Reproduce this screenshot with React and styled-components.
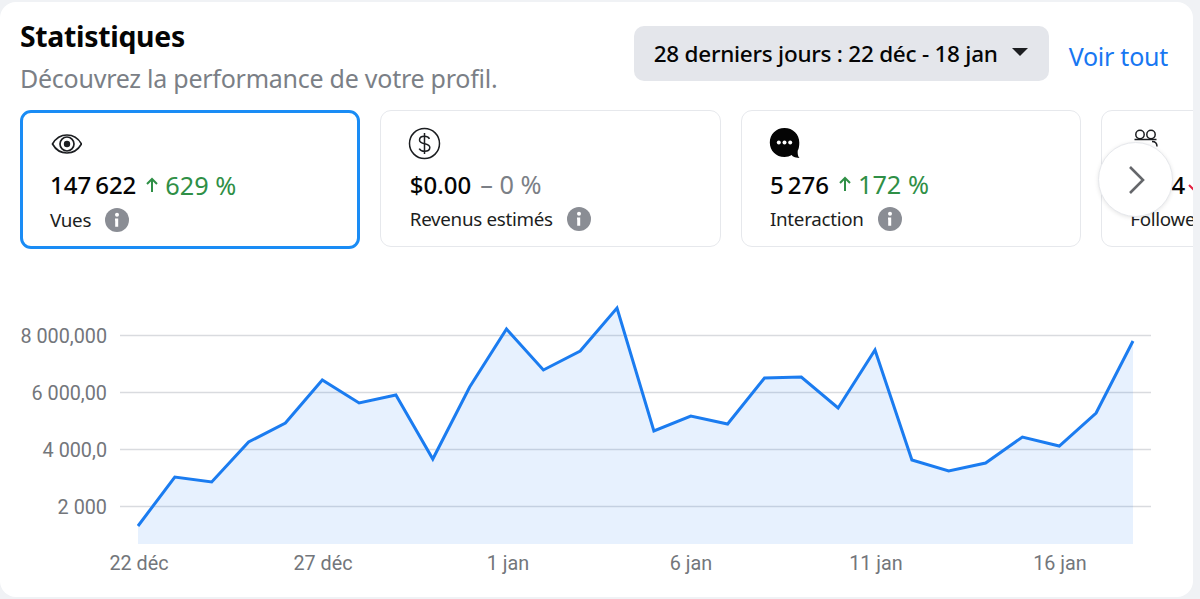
import React from "react";
import styled, { createGlobalStyle } from "styled-components";

const GlobalStyle = createGlobalStyle`
  html, body {
    margin: 0;
    padding: 0;
    background: #f0f2f5;
    font-family: "Noto Sans", "Open Sans", sans-serif;
  }
`;

const Page = styled.div`
  width: 1200px;
  height: 599px;
  padding: 2px 7px 2px 0;
  box-sizing: border-box;
  overflow: hidden;
`;

const Panel = styled.section`
  position: relative;
  height: 100%;
  background: #fff;
  border-radius: 16px;
  overflow: hidden;
  padding: 0 0 0 20px;
  box-sizing: border-box;
`;

const Header = styled.header`
  display: flex;
  justify-content: space-between;
  height: 108px;
  padding: 16px 25px 0 0;
  box-sizing: border-box;
`;

const Title = styled.h1`
  margin: 0;
  font-size: 28.4px;
  line-height: 36px;
  font-weight: 700;
  color: #050505;
  letter-spacing: -0.3px;
`;

const Subtitle = styled.p`
  margin: 9px 0 0;
  font-size: 25px;
  line-height: 30px;
  color: #7b7f86;
  letter-spacing: -0.25px;
`;

const Actions = styled.div`
  display: flex;
  align-items: flex-start;
  gap: 20px;
  padding-top: 8px;
`;

const RangeButton = styled.button`
  display: flex;
  align-items: center;
  gap: 14px;
  width: 415px;
  height: 55px;
  padding: 0 20px;
  box-sizing: border-box;
  border: 0;
  border-radius: 10px;
  background: #e4e6eb;
  color: #050505;
  font: 500 22.5px "Noto Sans", sans-serif;
  letter-spacing: -0.25px;
  white-space: nowrap;
`;

const Caret = styled.span`
  width: 0;
  height: 0;
  margin-top: -3px;
  border-left: 8px solid transparent;
  border-right: 8px solid transparent;
  border-top: 8px solid #1c1e21;
`;

const SeeAll = styled.a`
  font-size: 25px;
  line-height: 60px;
  color: #1877f2;
  white-space: nowrap;
  letter-spacing: -0.25px;
`;

const CardRow = styled.div`
  display: flex;
  gap: 20px;
  height: 140px;
  overflow: hidden;
`;

const Card = styled.div`
  flex: 0 0 auto;
  width: 340.25px;
  height: ${(p) => (p.$active ? "139px" : "137px")};
  padding: ${(p) => (p.$active ? "14.5px 0 0 27px" : "16px 0 0 28.5px")};
  box-sizing: border-box;
  border: ${(p) => (p.$active ? "3px solid #1a8cf5" : "1.5px solid #e6e8ec")};
  border-radius: 11px;
  background: #fff;
`;

const IconSlot = styled.div`
  display: flex;
  align-items: center;
  height: 32px;
  margin-left: -1.5px;
  color: #1c1e21;
`;

const Figures = styled.div`
  display: flex;
  align-items: center;
  margin-top: 7px;
  height: 36px;
  white-space: nowrap;
`;

const Total = styled.span`
  font-size: 24px;
  font-weight: 500;
  color: #050505;
  margin-right: ${(p) => (p.$tight ? "2px" : "9px")};
`;

const Change = styled.span`
  display: inline-flex;
  align-items: center;
  gap: 6px;
  font-size: 25.3px;
  color: ${(p) => p.$color};
`;

const LabelRow = styled.div`
  display: flex;
  align-items: center;
  gap: 14px;
  height: 26px;
  margin-top: 4px;
  font-size: 18.8px;
  letter-spacing: -0.3px;
  color: #1c1e21;
  white-space: nowrap;
`;

const NextButton = styled.button`
  position: absolute;
  left: 1098px;
  top: 140px;
  width: 75px;
  height: 75px;
  display: flex;
  align-items: center;
  justify-content: center;
  padding: 0;
  border: 1px solid #e6e8ec;
  border-radius: 50%;
  background: #fff;
  box-shadow: 0 1px 4px rgba(0, 0, 0, 0.1);
`;

const ChartWrap = styled.div`
  margin-left: -20px;
  height: 349px;
`;

const ChartSvg = styled.svg`
  display: block;
`;

const AxisLabel = styled.text`
  font-family: "Roboto", "Liberation Sans", sans-serif;
  font-size: 19.8px;
  fill: #73767b;
`;

const EyeIcon = () => (
  <svg width="33.2" height="24" viewBox="-1 5 33.2 24" fill="none" stroke="#1c1e21" strokeWidth="1.7">
    <path d="M2.5 17C6 10.8 11 8 17 8s11 2.8 14.5 9C28 23.2 23 26 17 26S6 23.2 2.5 17Z" />
    <circle cx="17" cy="17" r="7" />
    <circle cx="17" cy="17" r="3.2" fill="#1c1e21" stroke="none" />
  </svg>
);

const DollarIcon = () => (
  <svg width="33" height="33" viewBox="0 0 33 33" fill="none" stroke="#1c1e21" strokeWidth="1.5">
    <circle cx="16.5" cy="16.5" r="15" />
    <path d="M21.5 11.8c-1-1.6-2.8-2.5-5-2.5-2.9 0-5 1.500-5 3.700 0 5.200 10.300 2.300 10.300 7.500 0 2.200-2.200 3.800-5.300 3.800-2.400 0-4.300-1-5.300-2.700" />
    <path d="M16.500 6v21" />
  </svg>
);

const BubbleIcon = () => (
  <svg width="32" height="33" viewBox="0 0 32 33">
    <path d="M15.500 1C7 1 .8 7.300.8 15.500S7 30 15.500 30c2.700 0 5.200-.7 7.300-1.900.5 1.300 2.500 2.700 7.700 2.900-1.600-1.700-2-4-1.800-7.300C30 21.500 30.300 18.500 30.300 15.500 30.300 7.300 24 1 15.500 1Z" fill="#050505" />
    <circle cx="9.800" cy="15.500" r="2" fill="#fff" />
    <circle cx="15.500" cy="15.500" r="2" fill="#fff" />
    <circle cx="21.200" cy="15.500" r="2" fill="#fff" />
  </svg>
);

const PeopleIcon = () => (
  <svg width="30" height="32" viewBox="-4 -1.500 30 32" fill="none" stroke="#1c1e21" strokeWidth="1.5">
    <circle cx="7" cy="6" r="4.200" />
    <circle cx="18" cy="6" r="4.200" />
    <path d="M1.500 11h22" />
    <path d="M19 13c3 0 5 2 5 5" />
  </svg>
);

const InfoIcon = () => (
  <svg width="24" height="24" viewBox="0 0 24 24">
    <circle cx="12" cy="12" r="12" fill="#8a8d94" />
    <circle cx="12" cy="6.800" r="2" fill="#fff" />
    <path d="M10 10.500h3.200v8.200h-3V12.400H10Z" fill="#fff" />
  </svg>
);

const ArrowUp = ({ color }) => (
  <svg width="14" height="16" viewBox="0 0 14 16" fill="none" stroke={color} strokeWidth="2">
    <path d="M7 15V2M2 7l5-5 5 5" />
  </svg>
);

const ArrowDown = ({ color }) => (
  <svg width="14" height="16" viewBox="0 0 14 16" fill="none" stroke={color} strokeWidth="2">
    <path d="M7 1v13M2 9l5 5 5-5" />
  </svg>
);

const stats = [
  { key: "views", icon: <EyeIcon />, total: "147\u2009622", change: "629 %", dir: "up", label: "Vues", active: true },
  { key: "money", icon: <DollarIcon />, total: "$0.00", change: "– 0 %", dir: "none", label: "Revenus estimés" },
  { key: "inter", icon: <BubbleIcon />, total: "5\u2009276", change: "172 %", dir: "up", label: "Interaction" },
  { key: "follow", icon: <PeopleIcon />, total: "1004", change: "4 %", dir: "down", label: "Followers" },
];

const colors = { up: "#2f8f46", none: "#7b7f86", down: "#e41e3f" };

const points = [
  526, 477, 482, 442, 423, 380, 403, 395, 459, 387, 329, 370, 351, 308,
  431, 416, 424, 378, 377, 408, 350, 460, 471, 463, 437, 446, 413, 341,
];
const chartTop = 250; // page y where the chart starts
const xOf = (i) => 138 + i * 36.85;
const line = points.map((y, i) => `${xOf(i).toFixed(1)},${y - chartTop}`).join(" ");
const area = `138,${544 - chartTop} ${line} 1133,${544 - chartTop}`;

const yTicks = [
  { y: 335.5, label: "8 000,000" },
  { y: 392.5, label: "6 000,00" },
  { y: 449.5, label: "4 000,0" },
  { y: 506.5, label: "2 000" },
];
const xTicks = [
  { x: 139, label: "22 déc" },
  { x: 323, label: "27 déc" },
  { x: 508, label: "1 jan" },
  { x: 691, label: "6 jan" },
  { x: 876, label: "11 jan" },
  { x: 1060, label: "16 jan" },
];

function Chart() {
  return (
    <ChartWrap>
      <ChartSvg width="1193" height="349" viewBox="0 0 1193 349">
        {yTicks.map((t) => (
          <line key={t.label} x1="120" x2="1151" y1={t.y - chartTop} y2={t.y - chartTop} stroke="#d9dbdf" strokeWidth="1.500" />
        ))}
        <polygon points={area} fill="#1877f2" fillOpacity="0.1" />
        <polyline points={line} fill="none" stroke="#1b7cf0" strokeWidth="3" strokeLinejoin="miter" />
        {yTicks.map((t) => (
          <AxisLabel key={t.label} x="107" y={t.y - chartTop + 7} textAnchor="end">
            {t.label}
          </AxisLabel>
        ))}
        {xTicks.map((t) => (
          <AxisLabel key={t.label} x={t.x} y={570 - chartTop} textAnchor="middle">
            {t.label}
          </AxisLabel>
        ))}
      </ChartSvg>
    </ChartWrap>
  );
}

export default function App() {
  return (
    <Page>
      <GlobalStyle />
      <Panel>
        <Header>
          <div>
            <Title>Statistiques</Title>
            <Subtitle>Découvrez la performance de votre profil.</Subtitle>
          </div>
          <Actions>
            <RangeButton>
              28 derniers jours : 22 déc - 18 jan
              <Caret />
            </RangeButton>
            <SeeAll>Voir tout</SeeAll>
          </Actions>
        </Header>
        <CardRow>
          {stats.map((s) => (
            <Card key={s.key} $active={s.active}>
              <IconSlot>{s.icon}</IconSlot>
              <Figures>
                <Total $tight={s.dir === "down"}>{s.total}</Total>
                <Change $color={colors[s.dir]}>
                  {s.dir === "up" && <ArrowUp color={colors.up} />}
                  {s.dir === "down" && <ArrowDown color={colors.down} />}
                  {s.change}
                </Change>
              </Figures>
              <LabelRow>
                {s.label}
                <InfoIcon />
              </LabelRow>
            </Card>
          ))}
        </CardRow>
        <NextButton aria-label="Suivant">
          <svg width="24" height="32" viewBox="0 0 24 32" fill="none" stroke="#65676b" strokeWidth="2.600">
            <path d="M6 3l13 13L6 29" />
          </svg>
        </NextButton>
        <Chart />
      </Panel>
    </Page>
  );
}
